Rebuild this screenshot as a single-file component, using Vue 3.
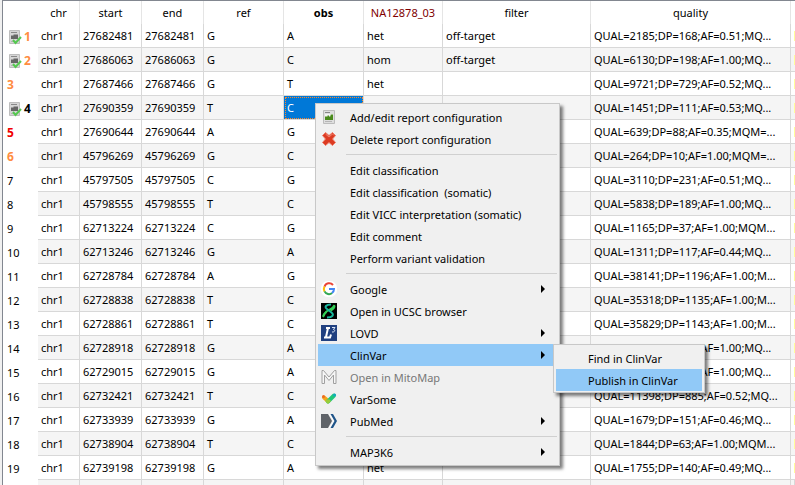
<script setup>
const columns = [
  { key: 'chr', label: 'chr' },
  { key: 'start', label: 'start' },
  { key: 'end', label: 'end' },
  { key: 'ref', label: 'ref' },
  { key: 'obs', label: 'obs', tone: 'strong' },
  { key: 'sample', label: 'NA12878_03', tone: 'affected' },
  { key: 'filter', label: 'filter' },
  { key: 'quality', label: 'quality' },
]

const rows = [
  ['27682481', 'G', 'A', 'het', 'off-target', 'QUAL=2185;DP=168;AF=0.51;MQ...', 'orange', true],
  ['27686063', 'G', 'C', 'hom', 'off-target', 'QUAL=6130;DP=198;AF=1.00;MQ...', 'orange', true],
  ['27687466', 'G', 'T', 'het', '', 'QUAL=9721;DP=729;AF=0.52;MQ...', 'orange'],
  ['27690359', 'T', 'C', '', '', 'QUAL=1451;DP=111;AF=0.53;MQ...', 'black', true],
  ['27690644', 'A', 'G', '', '', 'QUAL=639;DP=88;AF=0.35;MQM=...', 'red'],
  ['45796269', 'G', 'C', '', '', 'QUAL=264;DP=10;AF=1.00;MQM=...', 'orange'],
  ['45797505', 'C', 'G', '', '', 'QUAL=3110;DP=231;AF=0.51;MQ...'],
  ['45798555', 'T', 'C', '', '', 'QUAL=5838;DP=189;AF=1.00;MQ...'],
  ['62713224', 'C', 'G', '', '', 'QUAL=1165;DP=37;AF=1.00;MQM...'],
  ['62713246', 'G', 'A', '', '', 'QUAL=1311;DP=117;AF=0.44;MQ...'],
  ['62728784', 'A', 'G', '', '', 'QUAL=38141;DP=1196;AF=1.00;M...'],
  ['62728838', 'T', 'C', '', '', 'QUAL=35318;DP=1135;AF=1.00;M...'],
  ['62728861', 'T', 'C', '', '', 'QUAL=35829;DP=1143;AF=1.00;M...'],
  ['62728918', 'G', 'A', '', '', 'QUAL=2694;DP=187;AF=1.00;MQ...'],
  ['62729015', 'G', 'A', '', '', 'QUAL=3624;DP=127;AF=1.00;MQ...'],
  ['62732421', 'T', 'C', '', '', 'QUAL=11398;DP=885;AF=0.52;MQ...'],
  ['62733939', 'G', 'A', '', '', 'QUAL=1679;DP=151;AF=0.46;MQ...'],
  ['62738904', 'T', 'C', '', '', 'QUAL=1844;DP=63;AF=1.00;MQM...'],
  ['62739198', 'G', 'A', 'het', '', 'QUAL=1755;DP=140;AF=0.49;MQ...'],
].map(([pos, ref, obs, sample, filter, quality, tone, report]) => ({
  chr: 'chr1', start: pos, end: pos, ref, obs, sample, filter, quality, tone, report,
}))

const menuGroups = [
  [
    { label: 'Add/edit report configuration', icon: 'report' },
    { label: 'Delete report configuration', icon: 'delete' },
  ],
  [
    { label: 'Edit classification' },
    { label: 'Edit classification  (somatic)' },
    { label: 'Edit VICC interpretation (somatic)' },
    { label: 'Edit comment' },
    { label: 'Perform variant validation' },
  ],
  [
    { label: 'Google', icon: 'google', sub: true },
    { label: 'Open in UCSC browser', icon: 'ucsc' },
    { label: 'LOVD', icon: 'lovd', sub: true },
    { label: 'ClinVar', sub: true, active: true },
    { label: 'Open in MitoMap', icon: 'mitomap', disabled: true },
    { label: 'VarSome', icon: 'varsome' },
    { label: 'PubMed', icon: 'pubmed', sub: true },
  ],
  [{ label: 'MAP3K6', sub: true }],
]

const clinvarItems = [{ label: 'Find in ClinVar' }, { label: 'Publish in ClinVar', active: true }]
</script>

<template>
  <main class="view">
    <div class="frame">
      <table class="variants">
        <colgroup>
          <col class="w-index" /><col class="w-chr" /><col class="w-pos" /><col class="w-pos" />
          <col class="w-base" /><col class="w-base" /><col class="w-sample" /><col />
          <col class="w-quality" /><col class="w-next" />
        </colgroup>
        <thead>
          <tr>
            <td class="corner"></td>
            <th v-for="c in columns" :key="c.key" scope="col" :class="c.tone">{{ c.label }}</th>
            <td class="next"></td>
          </tr>
        </thead>
        <tbody>
          <tr v-for="(row, i) in rows" :key="i">
            <th scope="row">
              <span class="index" :class="row.tone">
                <svg v-if="row.report" class="badge" viewBox="0 0 14 16" aria-hidden="true">
                  <path d="M1.500 1.500h10v13h-10z" fill="#d6d6d6" stroke="#bdbdbd" />
                  <path d="M3 3.500h6" stroke="#888" />
                  <path d="M3 10V7l1-1 1 1 1-2 1 1 1-1 1 1 1-1v5z" fill="#666" />
                  <path d="M3 12.500h5" stroke="#b4b4b4" />
                  <path d="m5 11 2.500 3L13 8" fill="none" stroke="#55c850" stroke-width="2" />
                </svg>
                {{ i + 1 }}
              </span>
            </th>
            <td v-for="c in columns" :key="c.key" :class="{ selected: i === 3 && c.key === 'obs' }">{{ row[c.key] }}</td>
            <td class="next"><span class="mark"></span></td>
          </tr>
          <tr><th scope="row"></th><td v-for="n in 9" :key="n"></td></tr>
        </tbody>
      </table>
    </div>

    <div class="menu context" role="menu">
      <div v-for="(group, g) in menuGroups" :key="g" class="group">
        <button v-for="item in group" :key="item.label" type="button" role="menuitem" class="item"
          :class="{ active: item.active }" :disabled="item.disabled">
          <span class="icon">
            <svg v-if="item.icon === 'report'" viewBox="0 0 16 16">
              <path d="M2.500 1.500h11v13h-11z" fill="#dedede" stroke="#bcbcbc" />
              <path d="M4 3.500h5" stroke="#888" />
              <path d="M4 5h8v6H4z" fill="#f4f4f4" />
              <path d="M4 11V8l1-1 1 1 1-2 1 1 1 1 1-3 1 1 1-1v6z" fill="#4a8a1c" />
              <path d="M4 12.500h7" stroke="#b5b5b5" />
            </svg>
            <svg v-else-if="item.icon === 'delete'" viewBox="0 0 16 16">
              <path d="M4.500 1.500 8 4.500l3.500-3 3 3L11.500 8l3 3.500-3 3L8 11.500l-3.500 3-3-3L4.500 8l-3-3.500z" fill="#dc3b22" stroke="#ee7965" />
              <path d="m4.500 3 3.500 3L11.500 3 13 4.500" fill="none" stroke="#ef806d" />
            </svg>
            <svg v-else-if="item.icon === 'google'" viewBox="0 0 16 16">
              <rect width="16" height="16" rx="7" fill="#fff" />
              <path d="M12 4A5 5 0 0 0 3.500 5.600" fill="none" stroke="#ea4335" stroke-width="2" />
              <path d="M3.500 5.500a5 5 0 0 0 0 5" fill="none" stroke="#fbbc05" stroke-width="2" />
              <path d="M3.500 10.400a5 5 0 0 0 7.600 1.600" fill="none" stroke="#34a853" stroke-width="2" />
              <path d="M8 8h5a5 5 0 0 1-2 4" fill="none" stroke="#4285f4" stroke-width="2" />
            </svg>
            <svg v-else-if="item.icon === 'ucsc'" viewBox="0 0 16 16">
              <path d="M0 0h16v16H0z" fill="#000" />
              <path d="M13.500 2C12 6 8 6.500 5.500 8.500S3 12 2 14" fill="none" stroke="#35cf58" stroke-width="2" />
              <path d="M10 1.500C5 1.500 3 4 6 6l4.500 3.500c3 2.500 1 5-4.500 5" fill="none" stroke="#19b89f" stroke-width="2" />
              <path d="M13.500 3c0 2.500-2 3.500-4 4.500M2.500 13c0-2 1.500-3 3-4" fill="none" stroke="#35cf58" stroke-width="2" />
            </svg>
            <svg v-else-if="item.icon === 'lovd'" viewBox="0 0 16 16">
              <path d="M0 0h16v16H0z" fill="#204080" />
              <path d="M5 3h4M7 3 5 12M3 12.500h6l1-3" fill="none" stroke="#fff" stroke-width="2" />
              <path d="M11 2.500h3L12.500 4.500c2 0 1.500 3-1.500 2.500" fill="none" stroke="#dbe5f5" />
            </svg>
            <svg v-else-if="item.icon === 'mitomap'" viewBox="0 0 16 16">
              <path d="M1 14.500V1.500h1.500L8 8l5.500-6.500H15v13h-2.500V6L8 11.500 3.500 6v8.500z" fill="#f6f6f6" stroke="#a0a0a0" />
            </svg>
            <svg v-else-if="item.icon === 'varsome'" viewBox="0 0 16 16">
              <path d="M3 6.500 7 10" stroke="#f3a51b" stroke-width="4" stroke-linecap="round" />
              <path d="m7 10.500 6-6" stroke="#20c77a" stroke-width="4" stroke-linecap="round" />
              <path d="m5 9 2 2 2-2" fill="none" stroke="#99cc38" stroke-width="3" />
              <circle cx="2.500" cy="5.500" r="1.500" fill="#ed6b22" />
              <circle cx="13.500" cy="4" r="1.500" fill="#11aabf" />
            </svg>
            <svg v-else-if="item.icon === 'pubmed'" viewBox="0 0 16 16">
              <path d="M0 1h7l4 7-4 7H0z" fill="#5f6368" />
              <path d="M8 1h1l4 7-4 7H8l4-7z" fill="#fff" />
              <path d="M9.500 1H12l4 7-4 7H9.500l4-7z" fill="#20558a" />
            </svg>
          </span>
          <span class="label">{{ item.label }}</span>
          <svg v-if="item.sub" class="arrow" viewBox="0 0 4 8" aria-hidden="true"><path d="M0 0v8l4-4z" /></svg>
        </button>
      </div>
    </div>

    <div class="menu submenu" role="menu">
      <button v-for="item in clinvarItems" :key="item.label" type="button" role="menuitem" class="item"
        :class="{ active: item.active }">
        <span class="icon"></span>
        <span class="label">{{ item.label }}</span>
      </button>
    </div>
  </main>
</template>

<style>
body { margin: 0; }
</style>

<style scoped>
.view {
  position: relative;
  height: 100vh;
  overflow: hidden;
  padding-left: 2px;
  box-sizing: border-box;
  background: #f0f0f0;
  color: #000;
  font: 11px/16px "Noto Sans", "Open Sans", sans-serif;
}
.frame {
  height: 100%;
  overflow: hidden;
  box-sizing: border-box;
  border-top: 1px solid #828790;
  border-left: 1px solid #828790;
  background: #fff;
}
.variants { width: 100%; table-layout: fixed; border-collapse: separate; border-spacing: 0; }
.w-index { width: 35px; }
.w-chr { width: 42px; }
.w-pos { width: 62px; }
.w-base { width: 80px; }
.w-sample { width: 79px; }
.w-quality { width: 200px; }
.w-next { width: 4px; }
th, td {
  height: 24px;
  box-sizing: border-box;
  padding: 0 3px;
  overflow: hidden;
  white-space: nowrap;
  text-align: left;
  font-weight: 400;
}
thead th, thead td { height: 23px; border-right: 1px solid #e5e5e5; text-align: center; }
thead .corner, thead .next { border-right: 0; }
thead .strong { font-weight: 700; }
thead .affected { color: #800000; }
tbody td { border-right: 1px solid #d8d8d8; border-bottom: 1px solid #d8d8d8; }
tbody tr:nth-child(even) td { background: #f5f5f5; }
tbody th { padding: 0 4px; }
tbody .selected, tbody tr:nth-child(even) .selected {
  background: #0078d7;
  color: #fff;
  outline: 1px dotted #ff8728;
  outline-offset: -2px;
}
td.next { padding: 0; }
tbody td.next { border-right: 0; }
.mark { display: block; width: 1px; height: 10px; margin-left: auto; background: #ffff9b; }
.index { display: flex; align-items: center; gap: 2px; padding-top: 1px; }
.orange, .red, .black { font-size: 12px; font-weight: 700; }
.orange { color: #ff8c41; }
.red { color: #f00000; }
.badge { width: 14px; height: 16px; margin-left: 1px; }

.menu {
  position: absolute;
  box-sizing: border-box;
  padding: 2px;
  border: 1px solid #c8c8c8;
  background: #f0f0f0;
  box-shadow: 3px 3px 3px rgba(0, 0, 0, 0.5);
}
.context { left: 315px; top: 103px; width: 245px; }
.submenu { left: 553px; top: 344px; width: 152px; padding-bottom: 1px; }
.group + .group { padding-top: 9px; background: linear-gradient(#d0d0d0, #d0d0d0) 28px 4px / 100% 1px no-repeat; }
.item {
  display: flex;
  align-items: center;
  width: 100%;
  height: 22px;
  margin: 0;
  padding: 0 12px 0 3px;
  border: 0;
  background: none;
  color: #000;
  font: inherit;
  text-align: left;
}
.item.active { background: #91c9f7; }
.item:disabled { color: #777; }
.icon { flex: none; width: 16px; height: 16px; margin-right: 13px; }
.icon svg { display: block; width: 16px; height: 16px; }
.label { flex: 1; padding-top: 2px; white-space: pre; }
.arrow { width: 4px; height: 8px; }
</style>
